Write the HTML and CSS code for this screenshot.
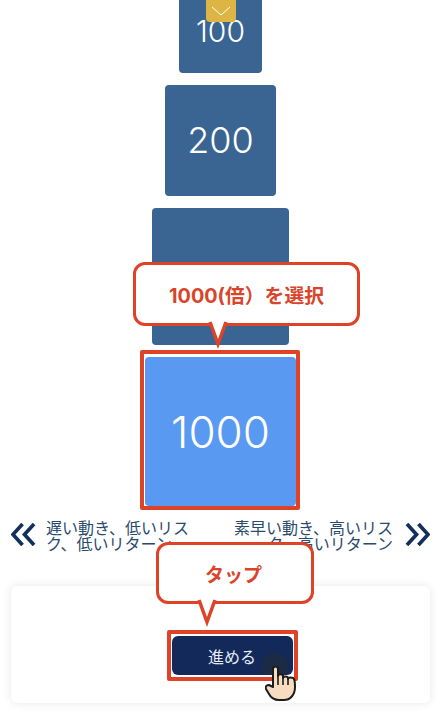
FILE: index.html
```html
<!DOCTYPE html>
<html lang="ja">
<head>
<meta charset="utf-8">
<title>倍率選択</title>
<link rel="stylesheet" href="styles.css">
</head>
<body>
<main class="screen">
  <div class="picker">
    <div class="tile tile-100">100</div>
    <div class="tile tile-200">200</div>
    <div class="tile tile-500"></div>
    <div class="tile tile-1000">1000</div>
  </div>
  <div class="scale">
    <svg class="chev" viewBox="0 0 26 24" aria-hidden="true"><path d="M12 1 2 12l10 11M24 1 14 12l10 11"/></svg>
    <p class="scale-text scale-left">遅い動き、低いリスク、低いリターン</p>
    <p class="scale-text scale-right">素早い動き、高いリスク、高いリターン</p>
    <svg class="chev" viewBox="0 0 26 24" aria-hidden="true"><path d="m2 1 10 11L2 23M14 1l10 11-10 11"/></svg>
  </div>
  <div class="panel">
    <button class="go">進める</button>
  </div>

  <div class="handle"><svg viewBox="0 0 30 22" aria-hidden="true"><path d="M6 7l9 8 9-8"/></svg></div>
  <div class="frame frame-tile"></div>
  <div class="frame frame-go"></div>
  <div class="bubble bubble-select">1000(倍）を選択<svg class="tail" viewBox="0 0 16 26" aria-hidden="true"><path d="M0 0l8 22 8-22"/></svg></div>
  <div class="bubble bubble-tap">タップ<svg class="tail" viewBox="0 0 16 26" aria-hidden="true"><path d="M0 0l8 22 8-22"/></svg></div>
  <div class="ripple"></div>
  <svg class="hand" viewBox="0 0 31 36" aria-hidden="true">
    <path class="skin" d="M8 3c0-3.500 5-3.500 5 0v7c0-2.500 5-2.500 5 0v2c0-2 5-2 5 0v1c0-2 5-2 6 0 1 2 1 5 1 8 0 8-5 13-11 13h-5c-5 0-8-2-10-6L1 23c-1-3 1-4 3-4l4 2z"/>
    <path class="fold" d="M13 10v9M18 12v7M23 13v6"/>
  </svg>
</main>
</body>
</html>
```

FILE: styles.css
```css
* { box-sizing: border-box; }
html, body { margin: 0; padding: 0; height: 100%; background: #fff; }
body { overflow: hidden; font-family: Inter, "Noto Sans CJK JP", sans-serif; }
.screen { position: relative; width: 441px; height: 714px; overflow: hidden; display: flex; flex-direction: column; align-items: center; }
.picker { display: flex; flex-direction: column; align-items: center; gap: 12px; margin-top: -10px; }
.tile { display: flex; align-items: center; justify-content: center; background: #3a6592; color: #fff; border-radius: 4px; font-weight: 300; }
.tile-100 { width: 83px; height: 83px; font-size: 30px; padding-bottom: 2px; }
.tile-200 { width: 111px; height: 111px; font-size: 36px; padding-bottom: 2px; }
.tile-500 { width: 137px; height: 137px; }
.tile-1000 { width: 151px; height: 149px; background: #5999f1; font-size: 44px; }
.scale { display: flex; align-items: center; width: 100%; margin-top: 12px; padding: 0 11px; }
.chev { width: 25px; height: 23px; flex: none; fill: none; stroke: #12305c; stroke-width: 3.800; }
.scale-text { margin: 1px 0 0; flex: 1; width: 0; font: 400 16px/16px "Noto Sans CJK JP", sans-serif; color: #2b4a6d; }
.scale-left { margin-left: 10px; padding-right: 10px; }
.scale-right { margin-right: 12px; padding-left: 7px; text-align: right; }
.panel { position: absolute; left: 11px; right: 11px; top: 586px; height: 117px; background: #fff; border-radius: 6px; box-shadow: 0 0 10px rgba(0, 0, 0, .1); display: flex; justify-content: center; padding: 50px 0 0 23px; }
.go { width: 121px; height: 39px; border: 0; border-radius: 6px; background: #12295a; color: #e6ecf4; font: 400 16px "Noto Sans CJK JP", sans-serif; }
.handle { position: absolute; left: 206px; top: 0; width: 30px; height: 22px; background: #dcb544; border-radius: 0 0 4px 4px; }
.handle svg { display: block; width: 30px; height: 22px; fill: none; stroke: #fff; stroke-width: 1; }
.frame { position: absolute; border: 4.500px solid #de4227; border-radius: 2px; }
.frame-tile { left: 140px; top: 350px; width: 160px; height: 160px; }
.frame-go { left: 167px; top: 630px; width: 131px; height: 51px; }
.bubble { position: absolute; display: flex; align-items: center; justify-content: center; background: #fff; border: 3.500px solid #de4227; border-radius: 12px; color: #d9442a; font: 700 19.800px Inter, "Noto Sans CJK JP", sans-serif; }
.bubble-select { left: 133px; top: 262px; width: 227px; height: 64px; }
.bubble-tap { left: 156px; top: 542px; width: 158px; height: 62px; font-size: 19px; padding-right: 3px; }
.tail { position: absolute; width: 16px; height: 26px; fill: #fff; stroke: #de4227; stroke-width: 3.500; stroke-miterlimit: 10; overflow: visible; }
.bubble-select .tail { left: 74px; top: 57px; }
.bubble-tap .tail { left: 40px; top: 55px; }
.ripple { position: absolute; left: 261px; top: 653px; width: 28px; height: 22px; border-radius: 14px 14px 6px 6px; background: #1b2a45; }
.hand { position: absolute; left: 265px; top: 666px; width: 31px; height: 36px; }
.skin { fill: #f7dcc0; stroke: #1c1c1c; stroke-width: 2; stroke-linejoin: round; }
.fold { fill: none; stroke: #1c1c1c; stroke-width: 1.600; }
```
